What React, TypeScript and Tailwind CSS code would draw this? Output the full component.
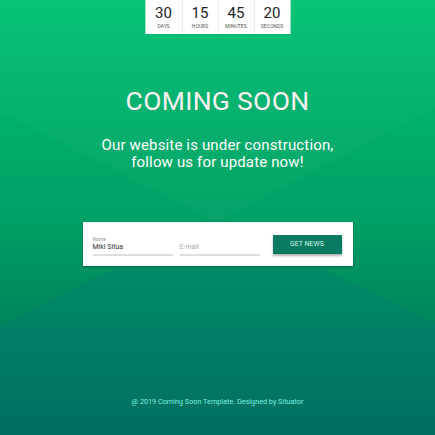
export default function App() {
  const units = [
    { value: "30", label: "Days" },
    { value: "15", label: "Hours" },
    { value: "45", label: "Minutes" },
    { value: "20", label: "Seconds" },
  ];

  return (
    <div
      className="relative h-[435px] w-[435px] overflow-hidden bg-gradient-to-b from-[#00c274] via-[#00a064] to-[#006854]"
      style={{ fontFamily: "Roboto, 'Noto Sans', sans-serif" }}
    >
      <svg
        className="pointer-events-none absolute inset-0"
        width="435"
        height="435"
        viewBox="0 0 435 435"
        aria-hidden
      >
        <polygon points="0,112 217,222 435,108 435,0 0,0" fill="#ffffff" opacity="0.025" />
        <polygon points="0,326 115,268 320,268 435,323 435,435 0,435" fill="#007a78" opacity="0.35" />
      </svg>

      <div className="relative flex flex-col items-center">
        <div className="flex h-[34px] bg-white border-x border-[#9fe3c2]">
          {units.map((u, i) => (
            <div
              key={u.label}
              className={`flex w-[36px] flex-col items-center pt-[4px] ${i > 0 ? "border-l border-[#e6efe9]" : ""}`}
            >
              <span className="text-[15px] leading-[18px] text-[#222]">{u.value}</span>
              <span className="mt-[1px] text-[5px] uppercase leading-[6px] text-[#555]">{u.label}</span>
            </div>
          ))}
        </div>

        <h1 className="mt-[53px] text-[26.5px] leading-[28px] tracking-[0.3px] text-[#fdf0f2]">COMING SOON</h1>

        <p className="mt-[22px] text-center text-[15px] leading-[17px] tracking-[0.15px] text-white">
          Our website is under construction,
          <br />
          follow us for update now!
        </p>

        <div className="mt-[51px] flex h-[44px] w-[270px] items-center bg-white pl-[10px] pr-[11px] shadow-[0_1px_2px_rgba(0,60,40,0.5)]">
          <div className="flex w-[80px] flex-col pt-[4px]">
            <span className="text-[5px] leading-[6px] text-[#999]">Name</span>
            <span className="mt-[1px] text-[7px] leading-[9px] text-[#333]">Mikl Situa</span>
            <span className="mt-[2px] h-[2px] bg-[#dedede]" />
          </div>
          <div className="ml-[7px] flex w-[80px] flex-col pt-[11px]">
            <span className="text-[7px] leading-[9px] text-[#aaa]">E-mail</span>
            <span className="mt-[2px] h-[2px] bg-[#dedede]" />
          </div>
          <button className="ml-auto flex h-[19px] w-[69px] items-center justify-center bg-[#0a7a62] text-[7px] text-[#cdf3e4] shadow-[0_2px_2px_rgba(0,0,0,0.3)]">
            GET NEWS
          </button>
        </div>

        <p className="mt-[131px] text-[7.25px] leading-[10px] text-[#7ff0e2]">
          @ 2019 Coming Soon Template. Designed by Situator
        </p>
      </div>
    </div>
  );
}
